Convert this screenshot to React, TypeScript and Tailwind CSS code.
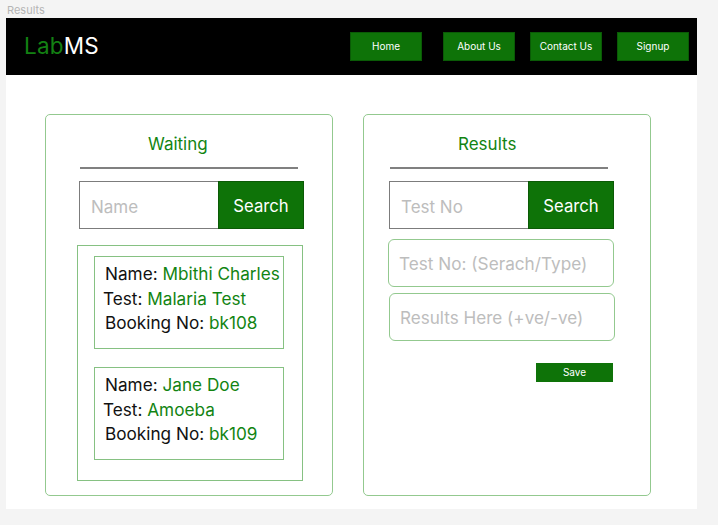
import React from "react";

const G = "text-[#128412]";

function Item({ name, test, booking }: { name: string; test: string; booking: string }) {
  return (
    <div className="w-[190px] h-[93px] border border-[#86c182] pt-[5px] text-[17.2px] leading-[24.5px] text-[#111]">
      <div className="pl-[10px] whitespace-nowrap">
        Name: <span className={G}>{name}</span>
      </div>
      <div className="pl-[8px] whitespace-nowrap">
        Test: <span className={G}>{test}</span>
      </div>
      <div className="pl-[10px] whitespace-nowrap">
        Booking No: <span className={G}>{booking}</span>
      </div>
    </div>
  );
}

function SearchRow({ placeholder }: { placeholder: string }) {
  return (
    <div className="flex h-[48px] w-[225px]">
      <input
        placeholder={placeholder}
        className="w-[139px] h-full border border-r-0 border-[#7c7c7c] pl-[11px] pt-[4px] text-[17px] outline-none placeholder:text-[#bdbdbd] bg-white"
      />
      <button className="w-[86px] h-full bg-[#0e7308] border border-[#0b5a06] pt-[3px] text-white text-[16.7px]">
        Search
      </button>
    </div>
  );
}

export default function App() {
  const navs = [
    { t: "Home", w: "w-[72px]", ml: "" },
    { t: "About Us", w: "w-[72px]", ml: "ml-[21px]" },
    { t: "Contact Us", w: "w-[72px]", ml: "ml-[15px]" },
    { t: "Signup", w: "w-[72px]", ml: "ml-[15px]" },
  ];
  return (
    <div className="w-[718px] h-[525px] bg-[#f4f4f4] font-['Inter',sans-serif] overflow-hidden">
      <div className="h-[18px] pl-[7px] text-[11px] leading-[20px] text-[#b4b4b4]">Results</div>
      <div className="ml-[6px] w-[691px] h-[491px] bg-white flex flex-col">
        <header className="h-[57px] bg-black flex items-center pl-[18px] pr-[8px]">
          <div className="text-[22.5px] leading-none tracking-[0.2px]">
            <span className="text-[#138013]">Lab</span>
            <span className="text-white">MS</span>
          </div>
          <nav className="ml-auto flex items-center">
            {navs.map((n) => (
              <button
                key={n.t}
                className={`${n.w} ${n.ml} h-[29px] bg-[#0e7308] border border-[#0a5a06] text-white text-[10px]`}
              >
                {n.t}
              </button>
            ))}
          </nav>
        </header>

        <div className="flex pt-[39px] pl-[39px] gap-[30px]">
          {/* Waiting card */}
          <section className="w-[288px] h-[382px] border border-[#93c98f] rounded-[5px] flex flex-col">
            <h2 className="pt-[19px] pl-[102px] text-[17px] leading-[20px] text-[#128412]">Waiting</h2>
            <div className="mt-[13px] ml-[34px] w-[218px] h-[2px] bg-[#808080]" />
            <div className="mt-[12px] ml-[33px]">
              <SearchRow placeholder="Name" />
            </div>
            <div className="mt-[16px] ml-[31px] w-[226px] h-[236px] border border-[#86c182] pt-[10px] pl-[16px] flex flex-col gap-[18px]">
              <Item name="Mbithi Charles" test="Malaria Test" booking="bk108" />
              <Item name="Jane Doe" test="Amoeba" booking="bk109" />
            </div>
          </section>

          {/* Results card */}
          <section className="w-[288px] h-[382px] border border-[#93c98f] rounded-[5px] flex flex-col">
            <h2 className="pt-[19px] pl-[94px] text-[17px] leading-[20px] text-[#128412]">Results</h2>
            <div className="mt-[13px] ml-[26px] w-[218px] h-[2px] bg-[#808080]" />
            <div className="mt-[12px] ml-[25px]">
              <SearchRow placeholder="Test No" />
            </div>
            <input
              placeholder="Test No: (Serach/Type)"
              className="mt-[10px] ml-[24px] w-[226px] h-[48px] border border-[#93c98f] rounded-[6px] pl-[10px] text-[17.2px] outline-none placeholder:text-[#bdbdbd]"
            />
            <input
              placeholder="Results Here (+ve/-ve)"
              className="mt-[6px] ml-[25px] w-[226px] h-[48px] border border-[#93c98f] rounded-[6px] pl-[10px] text-[17.1px] outline-none placeholder:text-[#bdbdbd]"
            />
            <button className="mt-[22px] ml-[172px] w-[77px] h-[19px] bg-[#0e7308] text-white text-[10px]">
              Save
            </button>
          </section>
        </div>
      </div>
    </div>
  );
}
